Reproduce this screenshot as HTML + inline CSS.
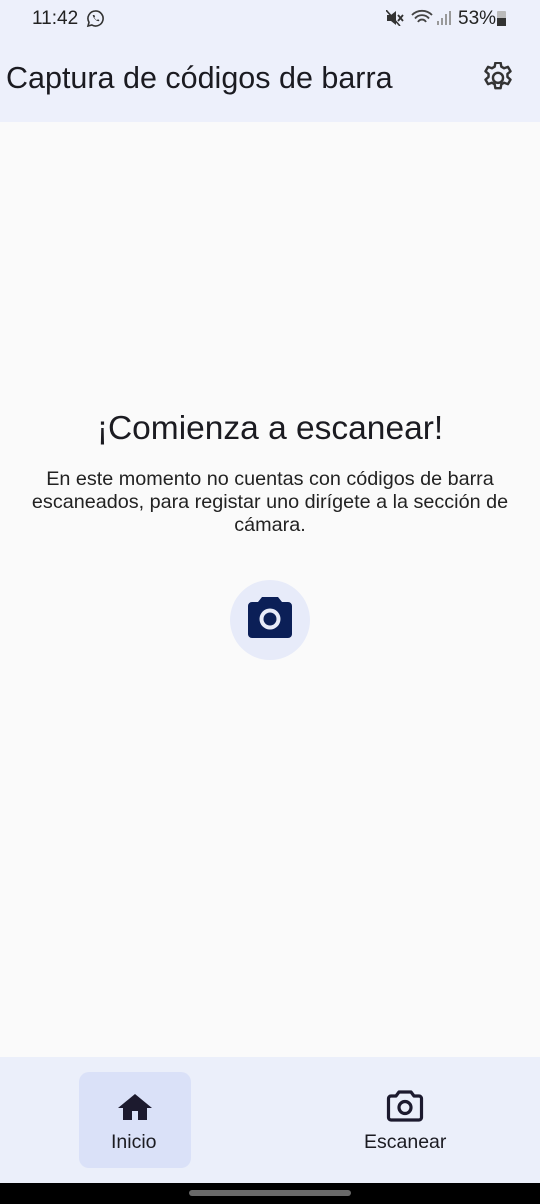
<!DOCTYPE html>
<html><head><meta charset="utf-8"><style>
*{margin:0;padding:0;box-sizing:border-box}
body{width:540px;height:1204px;background:#fafafa;font-family:"Liberation Sans",sans-serif;position:relative;overflow:hidden;color:#1b1b21}
.hdr{position:absolute;left:0;top:0;width:540px;height:122px;background:#edf0fb}
.t{position:absolute;font-size:19px;color:#222}
.title{position:absolute;left:6px;top:61px;font-size:30.5px;color:#1b1b21}
.h1{position:absolute;top:410px;width:540px;text-align:center;font-size:33.5px}
.p{position:absolute;top:468px;left:10px;width:520px;text-align:center;font-size:19.8px;line-height:23px;color:#222}
.circ{position:absolute;left:230px;top:580px;width:80px;height:80px;border-radius:50%;background:#e7ebf9}
.nav{position:absolute;left:0;top:1057px;width:540px;height:126px;background:#ebeffa}
.pill{position:absolute;left:79px;top:15px;width:112px;height:96px;border-radius:10px;background:#dae1f8}
.lbl{position:absolute;top:74px;font-size:19.5px}
.bar{position:absolute;left:0;top:1183px;width:540px;height:21px;background:#000}
.hbar{position:absolute;left:189px;top:7px;width:162px;height:6px;border-radius:3px;background:#6a6a6a}
</style></head><body>
<div class="hdr">
<div class="t" style="left:32px;top:8px">11:42</div>
<svg style="position:absolute;left:86px;top:9px" width="19" height="19" viewBox="0 0 24 24"><path d="M12 2.5a9.5 9.5 0 0 0-8.2 14.3L2.5 21.5l4.8-1.3A9.5 9.5 0 1 0 12 2.5z" fill="none" stroke="#333" stroke-width="2"/><path d="M8.5 7.5c.5 3.5 4 7.5 7.5 8l1-1.5-2-1-1 1c-1.5-.5-3-2-3.5-3.5l1-1-1-2z" fill="#333"/></svg>
<svg style="position:absolute;left:386px;top:10px" width="18" height="16" viewBox="0 0 18 16"><path d="M1 5h4l5-4v14l-5-4H1z" fill="#333"/><path d="M12 5l5 6M17 5l-5 6" stroke="#333" stroke-width="1.8"/><path d="M0 0l14 16" stroke="#333" stroke-width="1.6"/></svg>
<svg style="position:absolute;left:410px;top:9px" width="24" height="18" viewBox="0 0 24 18"><path d="M2 6a14 14 0 0 1 20 0M5 9.5a9 9 0 0 1 14 0M8 13a4.5 4.5 0 0 1 8 0" fill="none" stroke="#444" stroke-width="1.8"/></svg>
<svg style="position:absolute;left:436px;top:10px" width="16" height="16"><rect x="1" y="11" width="2" height="4" fill="#999"/><rect x="5" y="8" width="2" height="7" fill="#999"/><rect x="9" y="4" width="2" height="11" fill="#999"/><rect x="13" y="1" width="2" height="14" fill="#999"/></svg>
<div class="t" style="left:458px;top:8px">53%</div>
<div style="position:absolute;left:497px;top:11px;width:9px;height:15px;border-radius:1px;background:#bbb"><div style="position:absolute;bottom:0;width:9px;height:8px;background:#333"></div></div>
<div class="title">Captura de códigos de barra</div>
<svg style="position:absolute;left:482px;top:62px" width="32" height="32" viewBox="1.5 1.5 21 21"><path d="M10.3 2h3.4l.5 2.6 1.8 1 2.5-.9 1.7 2.9-2 1.7v2l2 1.8-1.7 2.9-2.5-.9-1.8 1-.5 2.6h-3.4l-.5-2.6-1.8-1-2.5.9-1.7-2.9 2-1.8v-2l-2-1.7 1.7-2.9 2.5.9 1.8-1z" fill="none" stroke="#333" stroke-width="1.6" stroke-linejoin="round"/><circle cx="12" cy="11.9" r="3.3" fill="none" stroke="#333" stroke-width="1.6"/></svg>
</div>
<div class="h1">¡Comienza a escanear!</div>
<div class="p">En este momento no cuentas con códigos de barra escaneados, para registar uno dirígete a la sección de cámara.</div>
<div class="circ"><svg style="position:absolute;left:16px;top:16px" width="48" height="44" viewBox="0 0 48 44"><path d="M16 1h16l4 5h6a4 4 0 0 1 4 4v28a4 4 0 0 1-4 4H6a4 4 0 0 1-4-4V10a4 4 0 0 1 4-4h6z" fill="#0b1f57"/><circle cx="24" cy="23" r="10.5" fill="#e7ebf9"/><circle cx="24" cy="23" r="6.5" fill="#0b1f57"/></svg></div>
<div class="nav">
<div class="pill"></div>
<svg style="position:absolute;left:117px;top:35px" width="36" height="30" viewBox="0 0 36 30"><path d="M18 2L1 16h5v12h9v-9h6v9h9V16h5z" fill="#1c1a2e"/></svg>
<div class="lbl" style="left:111px">Inicio</div>
<svg style="position:absolute;left:386px;top:32px" width="38" height="34" viewBox="0 0 38 34"><path d="M13 3h12l3 4h5a2.5 2.5 0 0 1 2.5 2.5v19A2.5 2.5 0 0 1 33 31H5a2.5 2.5 0 0 1-2.5-2.5v-19A2.5 2.5 0 0 1 5 7h5z" fill="none" stroke="#1c1a2e" stroke-width="3.2" stroke-linejoin="round"/><circle cx="19" cy="18.5" r="6" fill="none" stroke="#1c1a2e" stroke-width="3.2"/></svg>
<div class="lbl" style="left:364px">Escanear</div>
</div>
<div class="bar"><div class="hbar"></div></div>
</body></html>
